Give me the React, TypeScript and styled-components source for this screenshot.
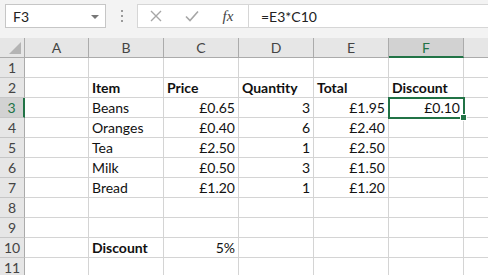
import React from "react";
import styled, { createGlobalStyle } from "styled-components";

const GlobalStyle = createGlobalStyle`
  html, body {
    margin: 0;
    padding: 0;
    background: #ffffff;
    overflow: hidden;
  }
  body {
    font-family: "Lato", "Open Sans", sans-serif;
  }
`;

const GREEN = "#217346";
const GRID = "#d4d4d4";

const Page = styled.div`
  width: 488px;
  height: 275px;
  overflow: hidden;
  background: #f3f3f3;
`;

const Toolbar = styled.div`
  display: flex;
  align-items: stretch;
  height: 38px;
  padding: 4px 0 10px 5px;
  box-sizing: border-box;
`;

const NameBox = styled.div`
  width: 101px;
  box-sizing: border-box;
  background: #ffffff;
  border: 1px solid #c6c6c6;
  display: flex;
  align-items: center;
  justify-content: space-between;
  padding: 0 6px 0 7px;
  font-size: 14px;
  color: #222;
`;

const DropArrow = styled.span`
  width: 0;
  height: 0;
  border-left: 4px solid transparent;
  border-right: 4px solid transparent;
  border-top: 4px solid #777;
  margin-top: 2px;
`;

const Grip = styled.div`
  width: 31px;
  display: flex;
  flex-direction: column;
  align-items: center;
  justify-content: center;
  gap: 3px;
`;

const GripDot = styled.span`
  width: 2px;
  height: 2px;
  background: #9a9a9a;
`;

const FormulaBox = styled.div`
  flex: 1;
  display: flex;
  align-items: center;
  background: #ffffff;
  border: 1px solid #d6d6d6;
  border-right: none;
`;

const IconSlot = styled.div`
  width: 36px;
  height: 100%;
  display: flex;
  align-items: center;
  justify-content: center;
`;

const Fx = styled.span`
  font-family: "Liberation Serif", "DejaVu Serif", serif;
  font-style: italic;
  font-size: 15px;
  color: #444;
  width: 36px;
  text-align: center;
`;

const FormulaDivider = styled.span`
  width: 1px;
  align-self: stretch;
  background: #d6d6d6;
  margin-left: 2px;
`;

const FormulaText = styled.div`
  padding-left: 12px;
  font-size: 14px;
  color: #222;
`;

const Sheet = styled.div`
  display: grid;
  width: 560px;
  grid-template-columns: 25px 64px repeat(6, 75px);
  grid-auto-rows: 20px;
  background: #ffffff;
`;

const Corner = styled.div`
  background: #e6e6e6;
  border-right: 1px solid #ababab;
  border-bottom: 1px solid #ababab;
  box-sizing: border-box;
  position: relative;
`;

const CornerTriangle = styled.span`
  position: absolute;
  right: 3px;
  bottom: 3px;
  width: 0;
  height: 0;
  border-left: 12px solid transparent;
  border-bottom: 12px solid #b4b4b4;
`;

const ColHead = styled.div<{ $active?: boolean }>`
  background: ${(p) => (p.$active ? "#d2d2d2" : "#e6e6e6")};
  color: ${(p) => (p.$active ? GREEN : "#444")};
  border-right: 1px solid #ababab;
  border-bottom: ${(p) => (p.$active ? `2px solid ${GREEN}` : "1px solid #ababab")};
  box-sizing: border-box;
  display: flex;
  align-items: center;
  justify-content: center;
  font-size: 14px;
  padding-top: ${(p) => (p.$active ? "1px" : "0")};
`;

const RowHead = styled.div<{ $active?: boolean }>`
  background: ${(p) => (p.$active ? "#d2d2d2" : "#e6e6e6")};
  color: ${(p) => (p.$active ? GREEN : "#444")};
  border-right: ${(p) => (p.$active ? `2px solid ${GREEN}` : "1px solid #ababab")};
  border-bottom: 1px solid #c6c6c6;
  box-sizing: border-box;
  display: flex;
  align-items: flex-end;
  justify-content: center;
  padding-bottom: 1px;
  font-size: 14px;
`;

const Cell = styled.div<{ $align?: "left" | "right"; $bold?: boolean; $selected?: boolean }>`
  border-right: 1px solid ${GRID};
  border-bottom: 1px solid ${GRID};
  box-sizing: border-box;
  display: flex;
  align-items: flex-end;
  justify-content: ${(p) => (p.$align === "right" ? "flex-end" : "flex-start")};
  padding: 0 3px 1px 3px;
  font-size: 14px;
  font-weight: ${(p) => (p.$bold ? 700 : 400)};
  color: #111;
  white-space: nowrap;
  position: relative;
  ${(p) =>
    p.$selected &&
    `
    outline: 2px solid ${GREEN};
    outline-offset: -1px;
    z-index: 1;
    &::after {
      content: "";
      position: absolute;
      right: -4px;
      bottom: -4px;
      width: 5px;
      height: 5px;
      background: ${GREEN};
      border: 1px solid #fff;
    }
  `}
`;

type CellData = { v: string; right?: boolean; bold?: boolean };

const cols = ["A", "B", "C", "D", "E", "F", "G"];

const rows: Record<number, Record<string, CellData>> = {
  2: {
    B: { v: "Item", bold: true },
    C: { v: "Price", bold: true },
    D: { v: "Quantity", bold: true },
    E: { v: "Total", bold: true },
    F: { v: "Discount", bold: true },
  },
  3: {
    B: { v: "Beans" },
    C: { v: "£0.65", right: true },
    D: { v: "3", right: true },
    E: { v: "£1.95", right: true },
    F: { v: "£0.10", right: true },
  },
  4: {
    B: { v: "Oranges" },
    C: { v: "£0.40", right: true },
    D: { v: "6", right: true },
    E: { v: "£2.40", right: true },
  },
  5: {
    B: { v: "Tea" },
    C: { v: "£2.50", right: true },
    D: { v: "1", right: true },
    E: { v: "£2.50", right: true },
  },
  6: {
    B: { v: "Milk" },
    C: { v: "£0.50", right: true },
    D: { v: "3", right: true },
    E: { v: "£1.50", right: true },
  },
  7: {
    B: { v: "Bread" },
    C: { v: "£1.20", right: true },
    D: { v: "1", right: true },
    E: { v: "£1.20", right: true },
  },
  10: {
    B: { v: "Discount", bold: true },
    C: { v: "5%", right: true },
  },
};

const CrossIcon = () => (
  <svg width="12" height="12" viewBox="0 0 12 12">
    <path d="M1 1 L11 11 M11 1 L1 11" stroke="#a6a6a6" strokeWidth="1.4" fill="none" />
  </svg>
);

const CheckIcon = () => (
  <svg width="14" height="12" viewBox="0 0 14 12">
    <path d="M1 6.5 L5 10.5 L13 1.5" stroke="#a6a6a6" strokeWidth="1.6" fill="none" />
  </svg>
);

export default function App() {
  return (
    <Page>
      <GlobalStyle />
      <Toolbar>
        <NameBox>
          F3
          <DropArrow />
        </NameBox>
        <Grip>
          <GripDot />
          <GripDot />
          <GripDot />
        </Grip>
        <FormulaBox>
          <IconSlot>
            <CrossIcon />
          </IconSlot>
          <IconSlot>
            <CheckIcon />
          </IconSlot>
          <Fx>fx</Fx>
          <FormulaDivider />
          <FormulaText>=E3*C10</FormulaText>
        </FormulaBox>
      </Toolbar>
      <Sheet>
        <Corner>
          <CornerTriangle />
        </Corner>
        {cols.map((c) => (
          <ColHead key={c} $active={c === "F"}>
            {c}
          </ColHead>
        ))}
        {Array.from({ length: 11 }, (_, i) => i + 1).map((r) => (
          <React.Fragment key={r}>
            <RowHead $active={r === 3}>{r}</RowHead>
            {cols.map((c) => {
              const d = rows[r]?.[c];
              return (
                <Cell
                  key={c}
                  $align={d?.right ? "right" : "left"}
                  $bold={d?.bold}
                  $selected={r === 3 && c === "F"}
                >
                  {d?.v}
                </Cell>
              );
            })}
          </React.Fragment>
        ))}
      </Sheet>
    </Page>
  );
}
